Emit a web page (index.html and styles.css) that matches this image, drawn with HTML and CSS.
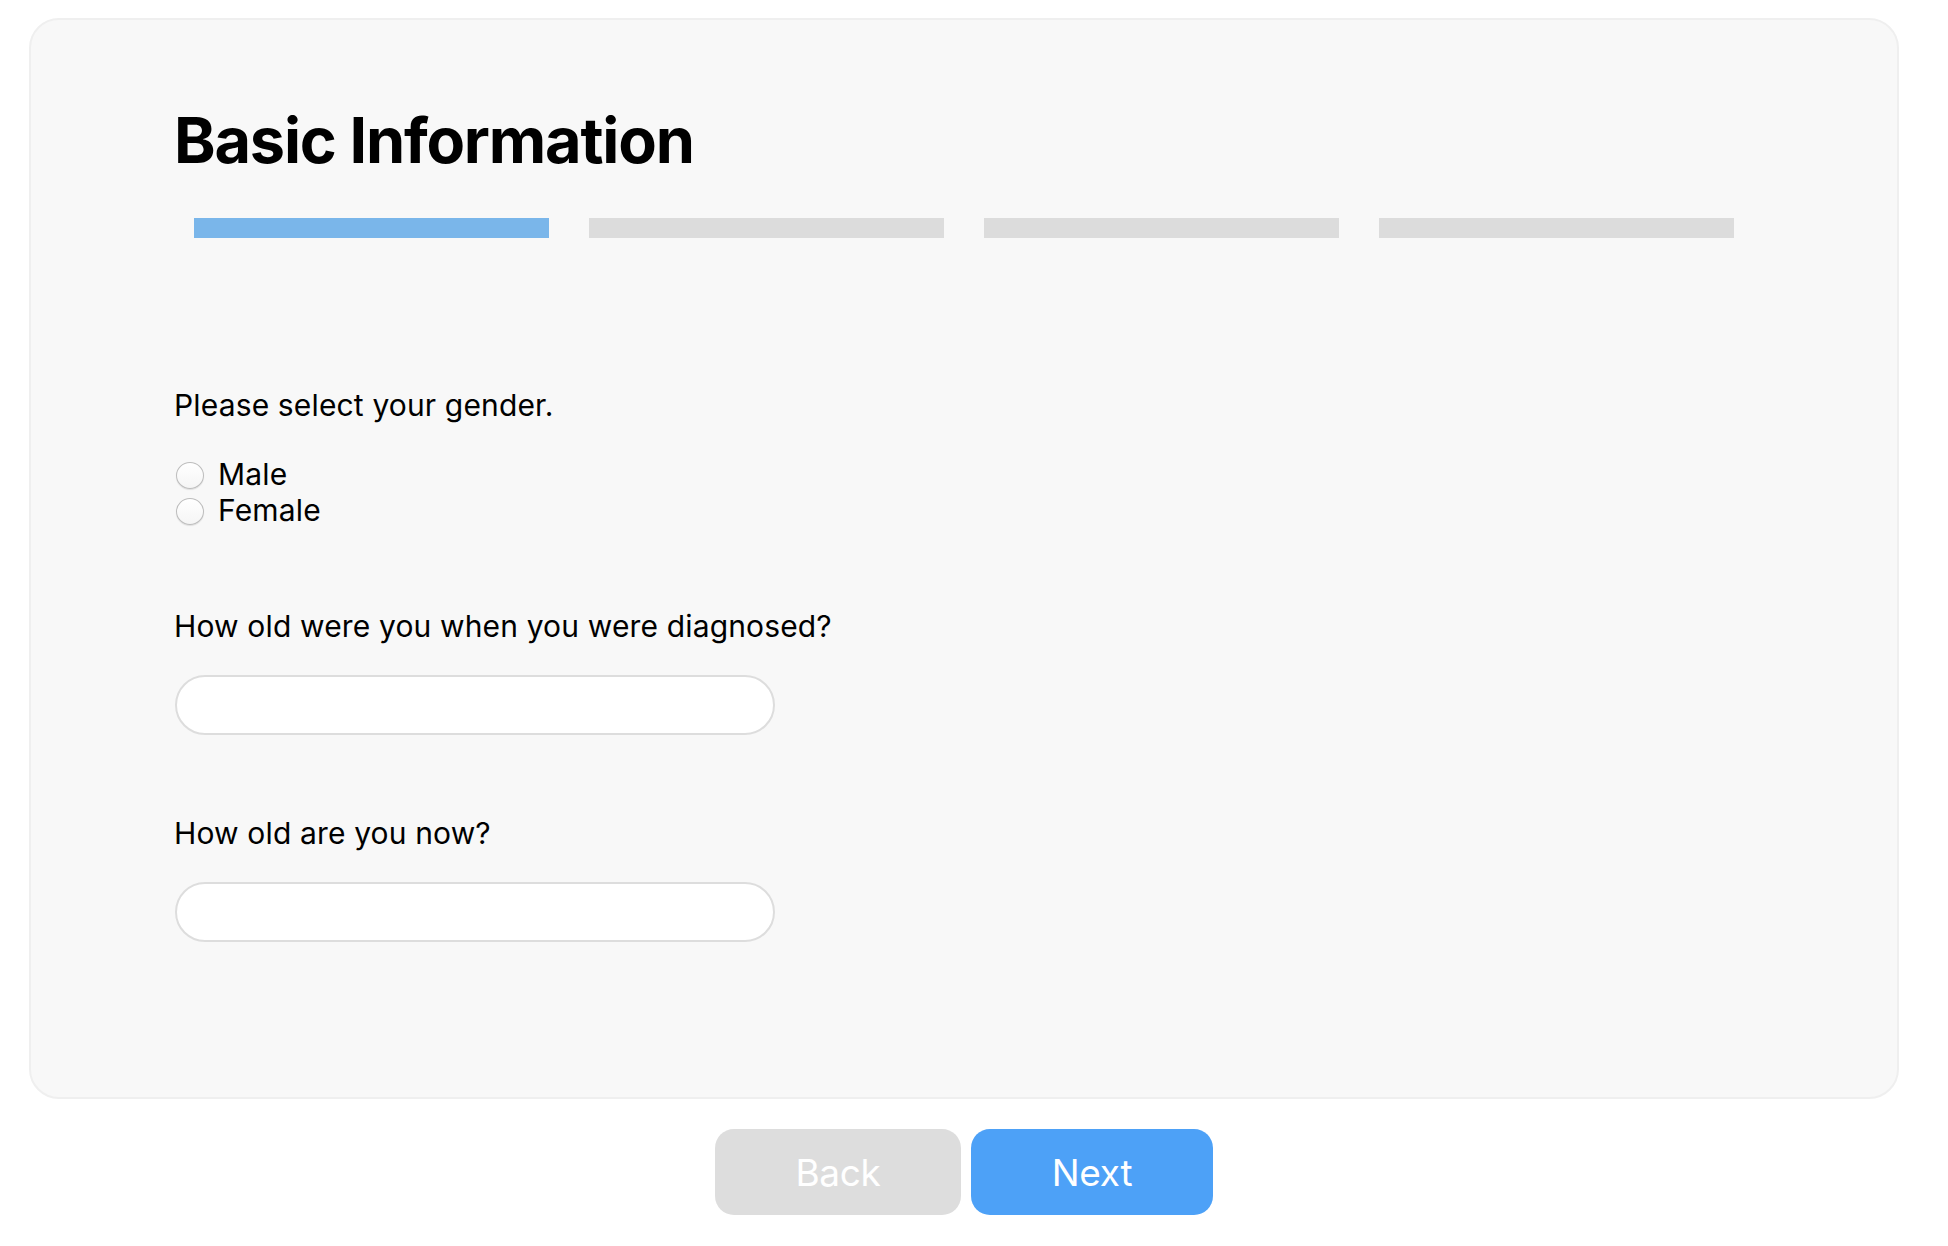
FILE: index.html
```html
<!DOCTYPE html>
<html lang="en">
<head>
<meta charset="utf-8">
<title>Basic Information</title>
<link rel="stylesheet" href="styles.css">
</head>
<body>
<div class="page">
  <section class="card">
    <h1 class="title">Basic Information</h1>
    <div class="steps">
      <div class="step step-active"></div>
      <div class="step"></div>
      <div class="step"></div>
      <div class="step"></div>
    </div>
    <div class="group group-first">
      <p class="question">Please select your gender.</p>
      <div class="radios">
        <label class="radio-row"><input type="radio" name="gender" class="radio"><span>Male</span></label>
        <label class="radio-row"><input type="radio" name="gender" class="radio"><span>Female</span></label>
      </div>
    </div>
    <div class="group">
      <p class="question">How old were you when you were diagnosed?</p>
      <input type="text" class="field">
    </div>
    <div class="group">
      <p class="question">How old are you now?</p>
      <input type="text" class="field">
    </div>
  </section>
  <div class="actions">
    <button class="btn btn-back" type="button">Back</button>
    <button class="btn btn-next" type="button">Next</button>
  </div>
</div>
</body>
</html>
```
FILE: styles.css
```css
html, body {
  margin: 0;
  padding: 0;
  background: #ffffff;
}
body {
  font-family: Inter, "Noto Sans", "Liberation Sans", sans-serif;
  color: #000;
}
.page {
  padding: 18px 49px 0 29px;
}
.card {
  background: #f8f8f8;
  border: 2px solid #efefef;
  border-radius: 30px;
  padding: 88px 145px 155px 143px;
}
.title {
  margin: 0;
  font-size: 63px;
  line-height: 64px;
  font-weight: 700;
  letter-spacing: -1.2px;
}
.steps {
  display: flex;
  gap: 40px;
  margin: 46px 18px 0 20px;
}
.step {
  flex: 1;
  height: 20px;
  background: #dcdcdc;
}
.step-active {
  background: #7ab6ea;
}
.group {
  margin-top: 80px;
}
.group-first {
  margin-top: 149px;
}
.question {
  margin: 0;
  font-size: 30px;
  line-height: 36px;
  letter-spacing: 0.15px;
}
.radios {
  display: flex;
  flex-direction: column;
  margin-top: 33px;
}
.radio-row {
  display: flex;
  align-items: center;
  font-size: 30px;
  line-height: 36px;
  letter-spacing: 0.15px;
}
.radio {
  appearance: none;
  -webkit-appearance: none;
  width: 28px;
  height: 27px;
  margin: 3px 14px 0 2px;
  border-radius: 50%;
  border: 1px solid #bdbdbd;
  background: linear-gradient(#ffffff, #f5f5f5);
  box-shadow: 0 1px 1px rgba(0,0,0,0.10);
  flex: none;
}
.field {
  display: block;
  box-sizing: border-box;
  width: 600px;
  height: 60px;
  margin-top: 31px;
  margin-left: 1px;
  border: 2px solid #dddddd;
  border-radius: 30px;
  background: #ffffff;
  padding: 0 24px;
  font: inherit;
  font-size: 28px;
  outline: none;
}
.actions {
  display: flex;
  justify-content: center;
  gap: 10px;
  margin-top: 30px;
}
.btn {
  height: 86px;
  border: none;
  border-radius: 19px;
  color: #ffffff;
  font-family: Inter, "Noto Sans", "Liberation Sans", sans-serif;
  font-size: 37px;
  font-weight: 400;
  letter-spacing: -0.3px;
  cursor: pointer;
}
.btn-back {
  width: 246px;
  background: #dddddd;
}
.btn-next {
  width: 242px;
  background: #4da1f7;
}
```
